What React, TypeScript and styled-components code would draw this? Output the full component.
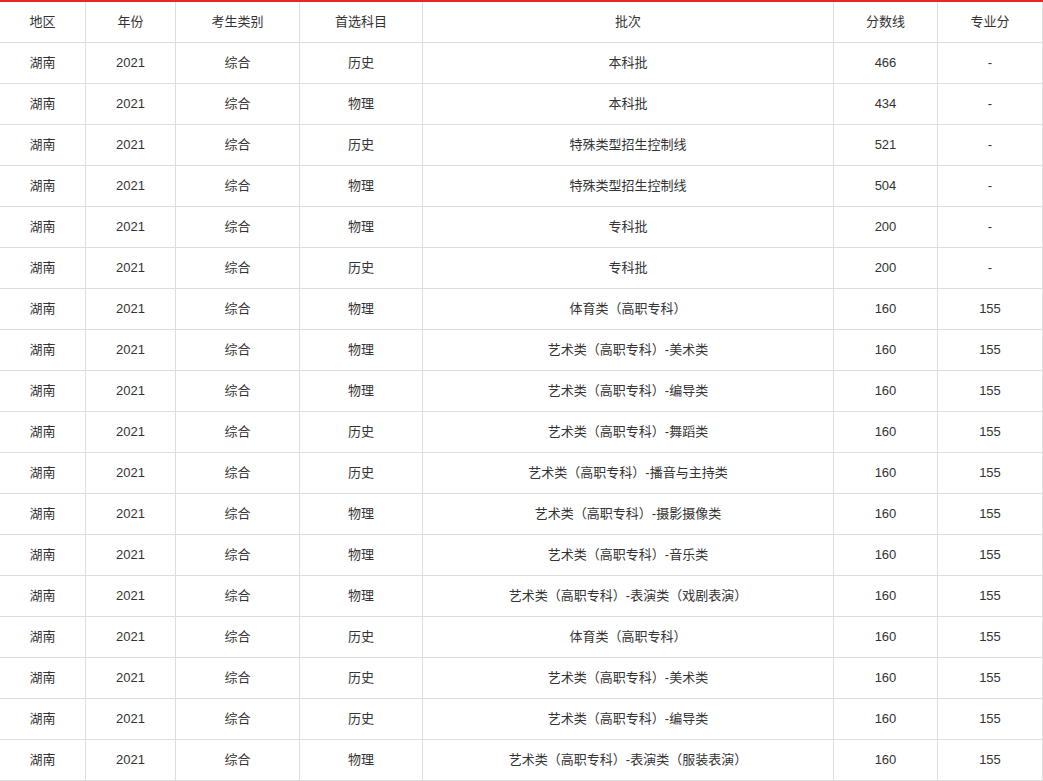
import React from "react";
import styled, { createGlobalStyle } from "styled-components";

const Global = createGlobalStyle`
  html, body { margin: 0; padding: 0; background: #fff; }
  body { font-family: "Liberation Sans", Arial, "Noto Sans CJK SC", sans-serif; }
`;

const Table = styled.div`
  width: 1043px;
  border-top: 2px solid #e4262f;
  box-sizing: border-box;
`;

const Row = styled.div`
  display: grid;
  grid-template-columns: 86px 90px 124px 123px 411px 104px 105px;
  height: 41px;
  border-bottom: 1px solid #dedede;
  box-sizing: border-box;
`;

const Cell = styled.div`
  display: flex;
  align-items: center;
  justify-content: center;
  border-right: 1px solid #dedede;
  font-size: 13px;
  line-height: 13px;
  padding-bottom: 1px;
  color: #333;
  white-space: nowrap;
`;

const headers = ["地区", "年份", "考生类别", "首选科目", "批次", "分数线", "专业分"];

const data: [string, string, string, string][] = [
  ["历史", "本科批", "466", "-"],
  ["物理", "本科批", "434", "-"],
  ["历史", "特殊类型招生控制线", "521", "-"],
  ["物理", "特殊类型招生控制线", "504", "-"],
  ["物理", "专科批", "200", "-"],
  ["历史", "专科批", "200", "-"],
  ["物理", "体育类（高职专科）", "160", "155"],
  ["物理", "艺术类（高职专科）-美术类", "160", "155"],
  ["物理", "艺术类（高职专科）-编导类", "160", "155"],
  ["历史", "艺术类（高职专科）-舞蹈类", "160", "155"],
  ["历史", "艺术类（高职专科）-播音与主持类", "160", "155"],
  ["物理", "艺术类（高职专科）-摄影摄像类", "160", "155"],
  ["物理", "艺术类（高职专科）-音乐类", "160", "155"],
  ["物理", "艺术类（高职专科）-表演类（戏剧表演）", "160", "155"],
  ["历史", "体育类（高职专科）", "160", "155"],
  ["历史", "艺术类（高职专科）-美术类", "160", "155"],
  ["历史", "艺术类（高职专科）-编导类", "160", "155"],
  ["物理", "艺术类（高职专科）-表演类（服装表演）", "160", "155"],
];

export default function App() {
  return (
    <>
      <Global />
      <Table>
        <Row>
          {headers.map((h) => (
            <Cell key={h}>{h}</Cell>
          ))}
        </Row>
        {data.map((r, i) => (
          <Row key={i}>
            <Cell>湖南</Cell>
            <Cell>2021</Cell>
            <Cell>综合</Cell>
            <Cell>{r[0]}</Cell>
            <Cell>{r[1]}</Cell>
            <Cell>{r[2]}</Cell>
            <Cell>{r[3]}</Cell>
          </Row>
        ))}
      </Table>
    </>
  );
}
